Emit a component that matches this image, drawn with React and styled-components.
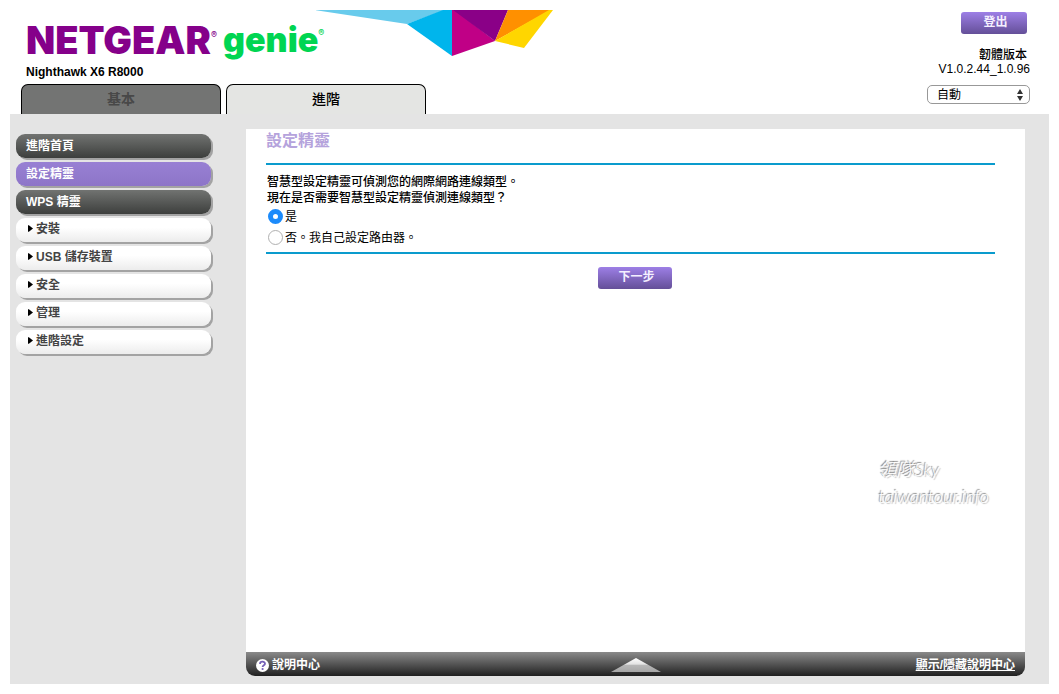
import React, { useState } from "react";
import styled, { createGlobalStyle } from "styled-components";

const MENU = [
  { label: "進階首頁", kind: "main" },
  { label: "設定精靈", kind: "main" },
  { label: "WPS 精靈", kind: "main" },
  { label: "安裝", kind: "group" },
  { label: "USB 儲存裝置", kind: "group" },
  { label: "安全", kind: "group" },
  { label: "管理", kind: "group" },
  { label: "進階設定", kind: "group" },
];

const App = () => {
  const [current, setCurrent] = useState("設定精靈");
  const [detect, setDetect] = useState("yes");

  return (
    <Page>
      <GlobalStyle />
      <Header>
        <HeaderLeft>
          <BrandRow>
            <Brand>
              <Logo>
                <Netgear>
                  NETGEAR<Mark>®</Mark>
                </Netgear>
                <Genie>
                  genie<Mark>®</Mark>
                </Genie>
              </Logo>
              <Model>Nighthawk X6 R8000</Model>
            </Brand>
            <Gems />
          </BrandRow>
          <Tabs>
            <Tab type="button">基本</Tab>
            <Tab type="button" $active>
              進階
            </Tab>
          </Tabs>
        </HeaderLeft>
        <Account>
          <LogoutButton type="button">登出</LogoutButton>
          <Firmware>
            <FirmwareLabel>韌體版本</FirmwareLabel>
            <div>V1.0.2.44_1.0.96</div>
          </Firmware>
          <SelectBox>
            <LanguageSelect aria-label="語言" defaultValue="auto">
              <option value="auto">自動</option>
            </LanguageSelect>
            <SelectArrows viewBox="0 0 6 12" aria-hidden="true">
              <path d="M3 0 6 5H0zM3 12 0 7h6z" fill="#333" />
            </SelectArrows>
          </SelectBox>
        </Account>
      </Header>

      <Body>
        <Sidebar>
          {MENU.map((item) =>
            item.kind === "main" ? (
              <MainItem
                key={item.label}
                type="button"
                $active={item.label === current}
                onClick={() => setCurrent(item.label)}
              >
                {item.label}
              </MainItem>
            ) : (
              <GroupItem key={item.label} type="button">
                <Caret viewBox="0 0 6 8" aria-hidden="true">
                  <path d="M0 0h1l5 4-5 4H0z" fill="#000" />
                </Caret>
                {item.label}
              </GroupItem>
            )
          )}
        </Sidebar>

        <Main>
          <Content>
            <Title>設定精靈</Title>
            <Question>
              <Legend>
                智慧型設定精靈可偵測您的網際網路連線類型。
                <br />
                現在是否需要智慧型設定精靈偵測連線類型？
              </Legend>
              <Choice>
                <Radio
                  name="detect"
                  checked={detect === "yes"}
                  onChange={() => setDetect("yes")}
                />
                是
              </Choice>
              <Choice>
                <Radio
                  name="detect"
                  checked={detect === "no"}
                  onChange={() => setDetect("no")}
                />
                否。我自己設定路由器。
              </Choice>
            </Question>
            <Actions>
              <NextButton type="button">下一步</NextButton>
            </Actions>
            <Signature>
              領隊Sky
              <br />
              taiwantour.info
            </Signature>
          </Content>
          <HelpBar>
            <HelpLink href="#help">
              <HelpIcon />
              說明中心
            </HelpLink>
            <UpArrow />
            <ToggleLink href="#toggle">顯示/隱藏說明中心</ToggleLink>
          </HelpBar>
        </Main>
      </Body>
    </Page>
  );
};

export default App;

const Gems = () => (
  <GemSvg viewBox="0 0 238 46" aria-hidden="true">
    <path d="M-1 0H129L91 14z" fill="#68cbec" />
    <path d="M127 0h9v46L91 14z" fill="#00b5ec" />
    <path d="M136 0h3l40 31-43 15z" fill="#c00086" />
    <path d="M137 0h55l-13 31z" fill="#8a0087" />
    <path d="M192 0h43l-56 31z" fill="#ff9000" />
    <path d="M233 0h4l-29 38-29-7z" fill="#ffd600" />
  </GemSvg>
);

const HelpIcon = () => (
  <HelpSvg viewBox="0 0 13 13" aria-hidden="true">
    <circle cx="6.5" cy="6.5" r="6.5" fill="#fff" />
    <path
      d="M4 5C4 2 9 2 9 4.700 9 6.300 6.600 6.200 6.600 8"
      fill="none"
      stroke="#7561b8"
      strokeWidth="1.800"
    />
    <circle cx="6.600" cy="10" r="1.100" fill="#7561b8" />
  </HelpSvg>
);

const UpArrow = () => (
  <UpSvg viewBox="0 0 50 14" aria-hidden="true">
    <defs>
      <linearGradient id="up" x1="0" y1="0" x2="0" y2="1">
        <stop offset="0" stopColor="#fff" />
        <stop offset="0.45" stopColor="#e2e2e2" />
        <stop offset="0.5" stopColor="#b8b8b8" />
        <stop offset="1" stopColor="#a6a6a6" />
      </linearGradient>
    </defs>
    <path d="M25 0 50 14H0z" fill="url(#up)" />
  </UpSvg>
);

const GlobalStyle = createGlobalStyle`
  * {
    box-sizing: border-box;
  }

  body {
    margin: 0;
    background: #fff;
    color: #000;
    font-family: "Liberation Sans", "Noto Sans CJK TC", sans-serif;
    font-size: 12px;
    line-height: 16px;
  }

  button,
  select {
    margin: 0;
    padding: 0;
    border: 0;
    color: inherit;
    font: inherit;
  }

  button {
    cursor: pointer;
  }
`;

const Page = styled.div`
  display: flex;
  flex-direction: column;
  min-height: 100vh;
  padding: 10px;
`;

const Header = styled.header`
  display: flex;
  justify-content: space-between;
`;

const HeaderLeft = styled.div`
  display: flex;
  flex-direction: column;
`;

const BrandRow = styled.div`
  display: flex;
  align-items: flex-start;
  height: 74px;
`;

const Brand = styled.div`
  width: 306px;
  padding: 8px 0 0 16px;
  white-space: nowrap;
`;

const Logo = styled.div`
  display: flex;
  gap: 6px;
  height: 46px;
  font-family: Inter, sans-serif;
  font-weight: 900;
  line-height: 44px;
`;

const Netgear = styled.span`
  color: #85008a;
  font-size: 38px;
`;

const Genie = styled.span`
  color: #00d552;
  font-size: 34px;
`;

const Mark = styled.sup`
  font-size: 9px;
  font-weight: 500;
  line-height: 9px;
  vertical-align: 16px;
`;

const Model = styled.div`
  font-weight: 700;
`;

const GemSvg = styled.svg`
  flex: none;
  width: 238px;
  height: 46px;
`;

const Tabs = styled.nav`
  display: flex;
  gap: 5px;
  padding-left: 11px;
`;

const Tab = styled.button`
  width: 200px;
  height: 30px;
  padding-bottom: 2px;
  border: 1px solid #000;
  border-bottom: 0;
  border-radius: 7px 7px 0 0;
  background: ${(props) => (props.$active ? "#e4e5e3" : "#737473")};
  color: ${(props) => (props.$active ? "#000" : "#484848")};
  font-size: 14px;
  font-weight: ${(props) => (props.$active ? 500 : 700)};
`;

const Account = styled.div`
  display: flex;
  flex-direction: column;
  align-items: flex-end;
  padding: 2px 19px 0 0;
`;

const PurpleButton = styled.button`
  height: 22px;
  padding: 0 0 2px 3px;
  border-radius: 3px;
  background: linear-gradient(#9d7fe6, #644f98);
  color: #f4efff;
  font-weight: 700;
`;

const LogoutButton = styled(PurpleButton)`
  width: 66px;
  margin-right: 3px;
`;

const Firmware = styled.div`
  margin: 14px 0 9px;
  line-height: 14px;
  text-align: right;
`;

const FirmwareLabel = styled.div`
  padding-right: 3px;
  font-weight: 500;
`;

const SelectBox = styled.div`
  position: relative;
`;

const LanguageSelect = styled.select`
  display: block;
  width: 103px;
  height: 19px;
  padding: 0 18px 0 9px;
  border: 1px solid #989898;
  border-radius: 5px;
  background: #fff;
  appearance: none;
`;

const SelectArrows = styled.svg`
  position: absolute;
  top: 4px;
  right: 7px;
  width: 6px;
  height: 12px;
  pointer-events: none;
`;

const Body = styled.div`
  display: flex;
  flex: 1;
  align-items: stretch;
  padding: 15px 24px 8px 6px;
  background: #e4e4e4;
`;

const Sidebar = styled.nav`
  display: flex;
  flex: none;
  flex-direction: column;
  gap: 4px;
  width: 230px;
  padding: 5px 35px 0 0;
`;

const MenuItem = styled.button`
  display: flex;
  align-items: center;
  height: 24px;
  padding: 0 10px;
  border-radius: 9px;
  box-shadow: 2px 2px 0 #a3a3a3;
  font-weight: 700;
`;

const MainItem = styled(MenuItem)`
  background: ${(props) =>
    props.$active
      ? "linear-gradient(#9880d4, #8d75c8)"
      : "linear-gradient(#717371, #3d3f3d)"};
  color: #fff;
`;

const GroupItem = styled(MenuItem)`
  gap: 3px;
  padding: 0 12px 3px;
  background: linear-gradient(#fff 40%, #ececec);
  color: #444;
`;

const Caret = styled.svg`
  width: 5px;
  height: 7px;
`;

const Main = styled.main`
  display: flex;
  flex: 1;
  flex-direction: column;
  min-width: 0;
`;

const Content = styled.section`
  position: relative;
  flex: 1;
  padding: 0 30px 0 20px;
  background: #fff;
`;

const Title = styled.h1`
  margin: 0;
  padding-bottom: 10px;
  color: #b5a3dc;
  font-size: 16px;
  font-weight: 700;
  line-height: 24px;
`;

const Question = styled.fieldset`
  margin: 0;
  padding: 9px 1px 4px;
  border: solid #0a9bcd;
  border-width: 2px 0;
`;

const Legend = styled.legend`
  float: left;
  width: 100%;
  padding: 0;
  font-weight: 500;
`;

const Choice = styled.label`
  display: flex;
  clear: both;
  align-items: center;
  gap: 2px;
  height: 21px;
  padding-left: 1px;
`;

const Radio = styled.input.attrs({ type: "radio" })`
  width: 15px;
  height: 15px;
  margin: 0;
  border: 1px solid #b0b0b0;
  border-radius: 50%;
  background: #fff;
  appearance: none;

  &:checked {
    border: 5px solid #1c8bfb;
  }
`;

const Actions = styled.div`
  display: flex;
  justify-content: center;
  padding: 13px 0 0 9px;
`;

const NextButton = styled(PurpleButton)`
  width: 74px;
`;

const Signature = styled.div`
  position: absolute;
  right: 36px;
  bottom: 142px;
  color: #fff;
  font-family: Lato, "Noto Sans CJK TC", sans-serif;
  font-size: 18px;
  font-style: italic;
  font-weight: 300;
  line-height: 27px;
  text-shadow: -1px -1px 1px #777, 1px 1px 1px #bbb;
`;

const HelpBar = styled.footer`
  display: grid;
  grid-template-columns: 1fr auto 1fr;
  align-items: center;
  height: 24px;
  padding: 2px 10px 0;
  border-radius: 0 0 9px 9px;
  background: linear-gradient(#8a8a8a, #555 50%, #202020);
  color: #fff;
  font-weight: 700;
`;

const HelpLink = styled.a`
  display: flex;
  align-items: center;
  gap: 3px;
  color: inherit;
  text-decoration: none;
`;

const ToggleLink = styled.a`
  justify-self: end;
  color: inherit;
`;

const HelpSvg = styled.svg`
  width: 13px;
  height: 13px;
`;

const UpSvg = styled.svg`
  width: 50px;
  height: 14px;
`;
